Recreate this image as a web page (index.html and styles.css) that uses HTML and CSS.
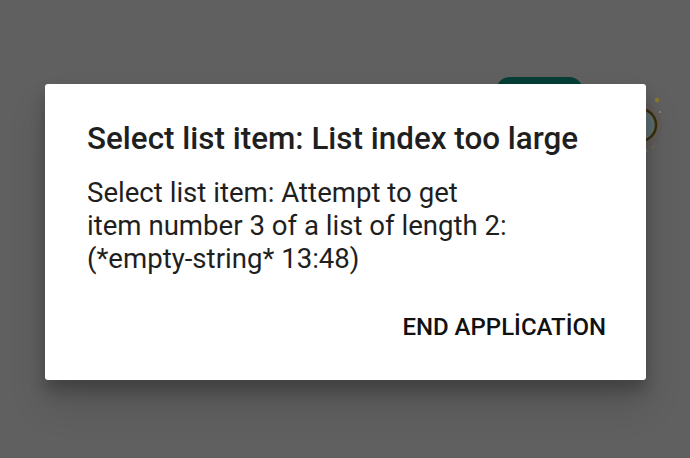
FILE: index.html
```html
<!DOCTYPE html>
<html>
<head>
<meta charset="utf-8">
<link rel="stylesheet" href="styles.css">
</head>
<body>
<div class="screen">
  <div class="bg-button"></div>
  <svg class="bg-badge" width="60" height="70" viewBox="0 0 60 70">
    <circle cx="10" cy="35" r="23" fill="#625c5a"/>
    <circle cx="10" cy="35" r="16" fill="#5e6e70" stroke="#3a2e08" stroke-width="2.5"/>
    <circle cx="27" cy="10" r="2.2" fill="#8a7a2a"/>
    <circle cx="30" cy="22" r="1" fill="#8a8a80"/>
    <circle cx="23" cy="57" r="1.2" fill="#7a6a40"/>
    <circle cx="16" cy="61" r="1" fill="#8a8a80"/>
  </svg>
  <div class="dialog">
    <h1 class="title">Select list item: List index too large</h1>
    <p class="message">Select list item: Attempt to get<br>item number 3 of a list of length 2:<br>(*empty-string* 13:48)</p>
    <div class="actions">
      <span class="action">END APPLİCATİON</span>
    </div>
  </div>
</div>
</body>
</html>
```
FILE: styles.css
```css
html, body {
  margin: 0;
  padding: 0;
}
body {
  width: 690px;
  height: 458px;
  overflow: hidden;
  background: #606060;
  font-family: Roboto, "Noto Sans", sans-serif;
}
.screen {
  position: relative;
  width: 690px;
  height: 458px;
  padding-top: 84px;
  box-sizing: border-box;
}
.bg-button {
  position: absolute;
  left: 496px;
  top: 77px;
  width: 87px;
  height: 30px;
  border-radius: 14px;
  background: #073f37;
}
.bg-badge {
  position: absolute;
  left: 630px;
  top: 90px;
}
.dialog {
  position: relative;
  margin-left: 45px;
  width: 601px;
  height: 296px;
  box-sizing: border-box;
  background: #ffffff;
  border-radius: 3px;
  box-shadow: 0 11px 15px rgba(0,0,0,0.22), 0 24px 38px rgba(0,0,0,0.14);
  padding: 36px 40px 0 42px;
  display: flex;
  flex-direction: column;
}
.title {
  margin: 0;
  font-size: 31.4px;
  font-weight: 500;
  line-height: 38px;
  color: #1f1f1f;
  white-space: nowrap;
}
.message {
  margin: 18px 0 0 0;
  font-size: 27.6px;
  font-weight: 400;
  line-height: 33px;
  color: #1f1f1f;
  white-space: nowrap;
}
.actions {
  display: flex;
  justify-content: flex-end;
  margin-top: 38px;
}
.action {
  font-size: 24px;
  font-weight: 500;
  color: #111111;
  line-height: 28px;
  white-space: nowrap;
}
```
